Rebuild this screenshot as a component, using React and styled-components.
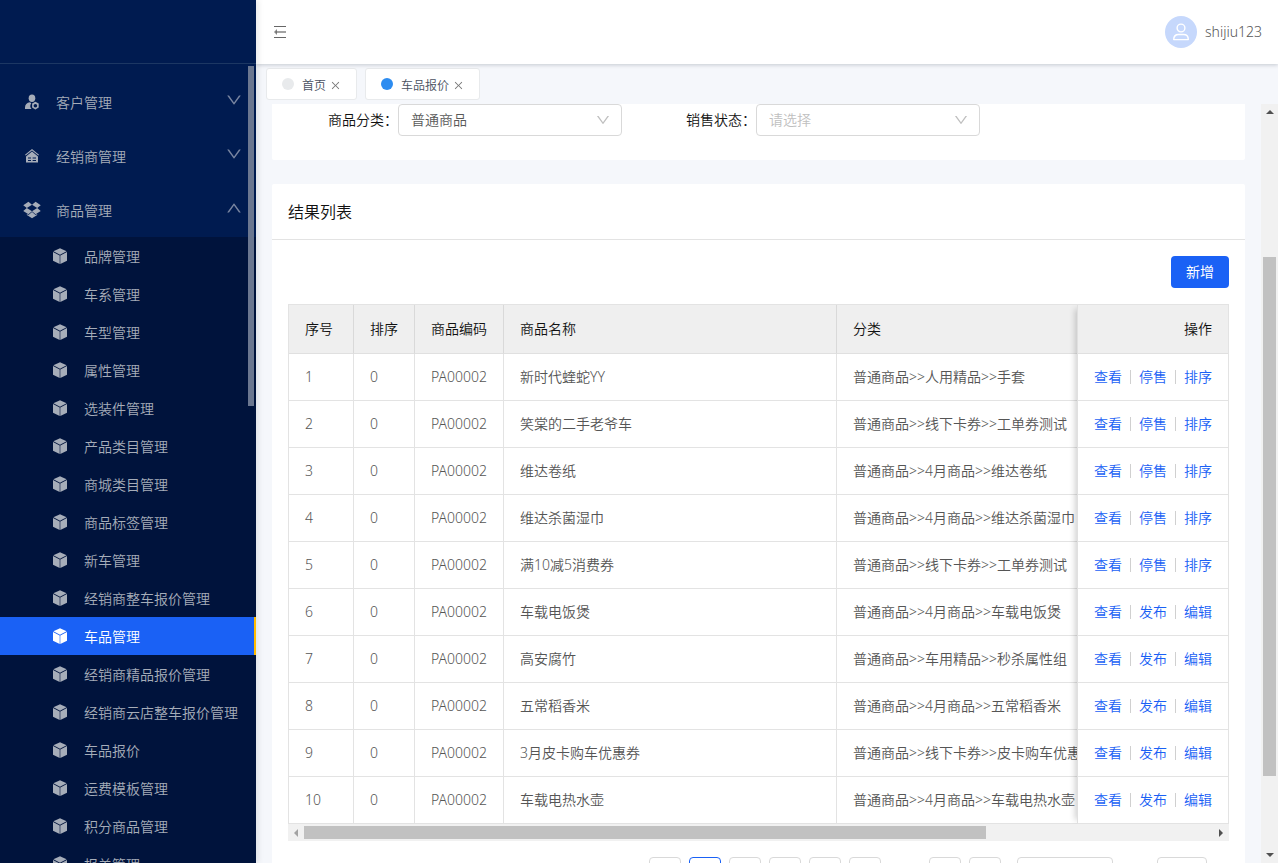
import React from 'react';
import styled, { createGlobalStyle } from 'styled-components';
import { AiOutlineClose, AiOutlineDown, AiOutlineUp, AiOutlineDropbox } from 'react-icons/ai';

const submenu = [
    '品牌管理', '车系管理', '车型管理', '属性管理', '选装件管理', '产品类目管理',
    '商城类目管理', '商品标签管理', '新车管理', '经销商整车报价管理', '车品管理',
    '经销商精品报价管理', '经销商云店整车报价管理', '车品报价', '运费模板管理',
    '积分商品管理', '报关管理',
];

const onSale = ['查看', '停售', '排序'];
const draft = ['查看', '发布', '编辑'];

const products = [
    { name: '新时代蝰蛇YY', type: '普通商品>>人用精品>>手套', actions: onSale },
    { name: '笑棠的二手老爷车', type: '普通商品>>线下卡券>>工单券测试', actions: onSale },
    { name: '维达卷纸', type: '普通商品>>4月商品>>维达卷纸', actions: onSale },
    { name: '维达杀菌湿巾', type: '普通商品>>4月商品>>维达杀菌湿巾', actions: onSale },
    { name: '满10减5消费券', type: '普通商品>>线下卡券>>工单券测试', actions: onSale },
    { name: '车载电饭煲', type: '普通商品>>4月商品>>车载电饭煲', actions: draft },
    { name: '高安腐竹', type: '普通商品>>车用精品>>秒杀属性组', actions: draft },
    { name: '五常稻香米', type: '普通商品>>4月商品>>五常稻香米', actions: draft },
    { name: '3月皮卡购车优惠券', type: '普通商品>>线下卡券>>皮卡购车优惠券', actions: draft },
    { name: '车载电热水壶', type: '普通商品>>4月商品>>车载电热水壶', actions: draft },
];

function CustomerIcon() {
    return (
        <svg width="16" height="16" viewBox="0 0 16 16" fill="currentColor">
            <ellipse cx="8" cy="4.2" rx="3.3" ry="3.7" />
            <path d="M6 8.3 C2.8 8.7 1 10.8 1 13.4 V15 H7.6 A4.6 4.6 0 0 1 7.3 9.2 Z" />
            <path fillRule="evenodd" d="M11.4 7.8 L14.7 9.6 V13.6 L11.4 15.6 L8.1 13.6 V9.6 Z M11.4 9.9 A1.8 1.8 0 1 0 11.4 13.5 A1.8 1.8 0 1 0 11.4 9.9" />
        </svg>
    )
}

function DealerIcon() {
    return (
        <svg width="16" height="16" viewBox="0 0 16 16" fill="currentColor">
            <path d="M8 1 L15 6.8 L14.3 7.6 L8 2.5 L1.7 7.6 L1 6.8 Z" />
            <path fillRule="evenodd" d="M8 3.6 L14 8.4 V14.6 H2 V8.4 Z M4 9.6 V10.6 H7 V9.6 Z M8.6 9.6 V10.6 H12 V9.6 Z M4 12 V13 H7 V12 Z M8.6 12 V13 H12 V12 Z" />
        </svg>
    )
}

function CubeIcon() {
    return (
        <svg width="16" height="16" viewBox="0 0 16 16" fill="currentColor">
            <path d="M8 0.3 L14.6 3.3 L8 6.7 L1.4 3.3 Z" />
            <path d="M1 4.1 L7.7 7.5 V16 L1 12.7 Z" />
            <path d="M15 4.1 L8.3 7.5 V16 L15 12.7 Z" />
        </svg>
    )
}

function FoldIcon() {
    return (
        <svg width="14" height="14" viewBox="0 0 14 14" fill="none" stroke="currentColor">
            <path d="M1 1.5 H13 M1 12.5 H13" />
            <path d="M3 7 H13" strokeWidth="2" opacity="0.6" />
            <path d="M4 4 L1 7 L4 10 Z" fill="currentColor" stroke="none" opacity="0.8" />
        </svg>
    )
}

function UserIcon() {
    return (
        <svg width="18" height="18" viewBox="0 0 18 18" fill="none" stroke="currentColor" strokeWidth="1.4">
            <circle cx="9" cy="5" r="3.9" />
            <path d="M1.7 16.6 C1.7 12.9 4.2 11.5 6.4 11.5 H11.6 C13.8 11.5 16.3 12.9 16.3 16.6 Z" strokeLinejoin="round" />
        </svg>
    )
}

function Sidebar() {
    return (
        <Side>
            <Brand />
            <SideBody>
                <Menu>
                    <li><MenuButton type="button"><IconSlot><CustomerIcon /></IconSlot><MenuText>客户管理</MenuText><AiOutlineDown size={18} /></MenuButton></li>
                    <li><MenuButton type="button"><IconSlot><DealerIcon /></IconSlot><MenuText>经销商管理</MenuText><AiOutlineDown size={18} /></MenuButton></li>
                    <li>
                        <MenuButton type="button"><IconSlot><AiOutlineDropbox size={20} /></IconSlot><MenuText>商品管理</MenuText><AiOutlineUp size={18} /></MenuButton>
                        <SubMenu>
                            {submenu.map((text) => (
                                <li key={text}>
                                    <SubLink href="#" $active={text === '车品管理'}><CubeIcon /><span>{text}</span></SubLink>
                                </li>
                            ))}
                        </SubMenu>
                    </li>
                </Menu>
                <SideThumb />
            </SideBody>
        </Side>
    )
}

function Filters() {
    return (
        <FilterCard>
            <Field>
                <label htmlFor="category">商品分类：</label>
                <SelectBox>
                    <Select id="category" defaultValue="普通商品"><option>普通商品</option></Select>
                    <AiOutlineDown size={16} />
                </SelectBox>
            </Field>
            <Field>
                <label htmlFor="status">销售状态：</label>
                <SelectBox>
                    <Select id="status" defaultValue="" $empty><option value="">请选择</option></Select>
                    <AiOutlineDown size={16} />
                </SelectBox>
            </Field>
        </FilterCard>
    )
}

function ProductTable() {
    return (
        <TableArea>
            <TableRow>
                <MainTable>
                    <Table>
                        <colgroup>
                            <Col $w={65} /><Col $w={61} /><Col $w={89} /><Col $w={333} /><Col $w={333} />
                        </colgroup>
                        <thead>
                            <tr><Th>序号</Th><Th>排序</Th><Th>商品编码</Th><Th>商品名称</Th><Th>分类</Th></tr>
                        </thead>
                        <tbody>
                            {products.map((item, i) => (
                                <tr key={item.name}>
                                    <Td>{i + 1}</Td>
                                    <Td>0</Td>
                                    <Td>PA00002</Td>
                                    <Td>{item.name}</Td>
                                    <Td>{item.type}</Td>
                                </tr>
                            ))}
                        </tbody>
                    </Table>
                </MainTable>
                <FixedTable>
                    <Table>
                        <thead>
                            <tr><Th $right>操作</Th></tr>
                        </thead>
                        <tbody>
                            {products.map((item) => (
                                <tr key={item.name}>
                                    <Td>
                                        <Actions>
                                            {item.actions.map((a) => <a href="#" key={a}>{a}</a>)}
                                        </Actions>
                                    </Td>
                                </tr>
                            ))}
                        </tbody>
                    </Table>
                </FixedTable>
            </TableRow>
            <HScroll>
                <Arrow viewBox="0 0 16 16" $faded><path d="M10 4 V12 L6 8 Z" /></Arrow>
                <HTrack><HThumb /></HTrack>
                <Arrow viewBox="0 0 16 16"><path d="M6 4 V12 L10 8 Z" /></Arrow>
            </HScroll>
        </TableArea>
    )
}

function Pagination() {
    return (
        <Pages>
            <PageButton type="button" aria-label="上一页">‹</PageButton>
            {[1, 2, 3, 4, 5].map((n) => (
                <PageButton type="button" key={n} $current={n === 1}>{n}</PageButton>
            ))}
            <Ellipsis />
            <PageButton type="button">20</PageButton>
            <PageButton type="button" aria-label="下一页">›</PageButton>
            <PageSize aria-label="每页条数"><option>10 条/页</option></PageSize>
            <Jumper aria-label="跳至" />
        </Pages>
    )
}

export default function App() {
    return (
        <>
            <GlobalStyle />
            <Layout>
                <Sidebar />
                <Main>
                    <Header>
                        <IconButton type="button" aria-label="收起菜单"><FoldIcon /></IconButton>
                        <User>
                            <Avatar><UserIcon /></Avatar>
                            shijiu123
                        </User>
                    </Header>
                    <Tabs>
                        <Tab><Dot /><TabText>首页</TabText><CloseButton type="button" aria-label="关闭首页"><AiOutlineClose size={11} /></CloseButton></Tab>
                        <Tab><Dot $active /><TabText>车品报价</TabText><CloseButton type="button" aria-label="关闭车品报价"><AiOutlineClose size={11} /></CloseButton></Tab>
                    </Tabs>
                    <Body>
                        <Content>
                            <Filters />
                            <Card>
                                <CardTitle>结果列表</CardTitle>
                                <CardBody>
                                    <Toolbar><PrimaryButton type="button">新增</PrimaryButton></Toolbar>
                                    <ProductTable />
                                    <Pagination />
                                </CardBody>
                            </Card>
                        </Content>
                        <VScroll>
                            <Arrow viewBox="0 0 16 16"><path d="M4 10 H12 L8 6 Z" /></Arrow>
                            <VTrack><VThumb /></VTrack>
                            <Arrow viewBox="0 0 16 16"><path d="M4 6 H12 L8 10 Z" /></Arrow>
                        </VScroll>
                    </Body>
                </Main>
            </Layout>
        </>
    )
}


const GlobalStyle = createGlobalStyle`
    * {
        box-sizing: border-box;
    }

    body {
        margin: 0;
        overflow: hidden;
        font-family: "Noto Sans", "Noto Sans CJK SC", sans-serif;
        font-size: 14px;
        font-weight: 350;
        line-height: 22px;
        color: #555;
    }

    button, select, input {
        font: inherit;
    }

    a {
        text-decoration: none;
    }

    ul {
        list-style: none;
        margin: 0;
        padding: 0;
    }
`

const Layout = styled.div`
    display: flex;
    height: 100vh;
    background: #f5f7fb;
`

const Side = styled.aside`
    width: 256px;
    flex-shrink: 0;
    display: flex;
    flex-direction: column;
    background: #001b50;
    color: #a6adb9;
    z-index: 2;
    box-shadow: 2px 0 6px rgba(0, 21, 41, 0.1);
`

const Brand = styled.div`
    height: 64px;
    flex-shrink: 0;
    border-bottom: 1px solid #1c3763;
`

const SideBody = styled.nav`
    position: relative;
    flex: 1;
    min-height: 0;
    overflow: hidden;
    padding-top: 11px;
`

const Menu = styled.ul`
    width: 100%;
`

const MenuButton = styled.button`
    width: 100%;
    height: 54px;
    display: flex;
    align-items: center;
    gap: 16px;
    padding: 0 13px 0 24px;
    border: 0;
    background: none;
    color: inherit;
    text-align: left;

    > svg {
        color: #7885a0;
        margin-bottom: 4px;
    }
`

const IconSlot = styled.span`
    width: 16px;
    display: flex;
    justify-content: center;

    svg {
        flex-shrink: 0;
    }
`

const MenuText = styled.span`
    flex: 1;
    padding-top: 2px;
`

const SubMenu = styled.ul`
    background: #00133c;
`

const SubLink = styled.a`
    height: 38px;
    display: flex;
    align-items: center;
    gap: 16px;
    padding-left: 52px;
    color: ${(p) => (p.$active ? '#fff' : 'inherit')};
    background: ${(p) => (p.$active ? '#1a61f5' : 'none')};
    border-right: 2px solid ${(p) => (p.$active ? '#ffba00' : 'transparent')};

    span {
        padding-top: 2px;
    }
`

/* floats over the menu */
const SideThumb = styled.div`
    position: absolute;
    top: 2px;
    right: 2px;
    width: 6px;
    height: 340px;
    background: #6b7790;
`

const Main = styled.div`
    flex: 1;
    min-width: 0;
    display: flex;
    flex-direction: column;
`

const Header = styled.header`
    height: 64px;
    flex-shrink: 0;
    display: flex;
    align-items: center;
    justify-content: space-between;
    padding: 0 16px;
    background: #fff;
    box-shadow: 0 1px 4px rgba(0, 21, 41, 0.2);
    z-index: 1;
`

const IconButton = styled.button`
    display: flex;
    padding: 0 1px;
    border: 0;
    background: none;
    color: #666;
`

const User = styled.div`
    display: flex;
    align-items: center;
    gap: 8px;
`

const Avatar = styled.span`
    width: 32px;
    height: 32px;
    display: flex;
    align-items: center;
    justify-content: center;
    border-radius: 50%;
    background: #c6d8fc;
    color: #fff;
`

const Tabs = styled.div`
    height: 40px;
    flex-shrink: 0;
    display: flex;
    gap: 8px;
    padding: 4px 10px;
`

const Tab = styled.div`
    height: 32px;
    display: flex;
    align-items: center;
    padding: 0 15px;
    border: 1px solid #e8eaec;
    border-radius: 3px;
    background: #fff;
    font-size: 12px;
    color: #495060;
`

const TabText = styled.span`
    padding-top: 3px;
`

const Dot = styled.span`
    width: 12px;
    height: 12px;
    margin-right: 8px;
    border-radius: 50%;
    background: ${(p) => (p.$active ? '#2d8cf0' : '#e8eaec')};
`

const CloseButton = styled.button`
    display: flex;
    padding: 3px 0 0;
    margin-left: 4px;
    border: 0;
    background: none;
    color: #777;
`

const Body = styled.div`
    flex: 1;
    min-height: 0;
    display: flex;
`

const Content = styled.main`
    flex: 1;
    min-width: 0;
    overflow: hidden;
    padding: 0 16px;
`

const FilterCard = styled.section`
    height: 56px;
    margin-bottom: 24px;
    padding-left: 56px;
    display: flex;
    align-items: flex-start;
    gap: 64px;
    background: #fff;
    border-radius: 0 0 2px 2px;
    color: #111;
`

const Field = styled.div`
    display: flex;
    align-items: center;
`

const SelectBox = styled.div`
    position: relative;
    width: 224px;

    svg {
        position: absolute;
        top: 8px;
        right: 11px;
        color: #bfbfbf;
        pointer-events: none;
    }
`

const Select = styled.select`
    appearance: none;
    width: 100%;
    height: 32px;
    padding: 0 12px;
    border: 1px solid #d9d9d9;
    border-radius: 4px;
    background: #fff;
    color: ${(p) => (p.$empty ? '#bfbfbf' : '#595959')};
`

const Card = styled.section`
    background: #fff;
    border-radius: 2px;
`

const CardTitle = styled.h2`
    margin: 0;
    padding: 17px 16px 15px;
    border-bottom: 1px solid #e3e3e3;
    font-size: 16px;
    font-weight: 350;
    line-height: 23px;
    color: #111;
`

const CardBody = styled.div`
    padding: 16px;
`

const Toolbar = styled.div`
    display: flex;
    justify-content: flex-end;
    margin-bottom: 16px;
`

const PrimaryButton = styled.button`
    height: 32px;
    padding: 0 15px;
    border: 0;
    border-radius: 4px;
    background: #1a61f5;
    color: #fff;
    font-weight: 400;
`

const TableArea = styled.div`
    margin-bottom: 16px;
`

const TableRow = styled.div`
    display: flex;
    border: 1px solid #e3e3e3;
    border-bottom: 0;
`

const MainTable = styled.div`
    flex: 1;
    min-width: 0;
    overflow: hidden;
`

const FixedTable = styled.div`
    width: 151px;
    flex-shrink: 0;
    border-left: 1px solid #e0e0e0;
    box-shadow: -6px 0 6px -4px rgba(0, 0, 0, 0.18);
    clip-path: inset(0 0 0 -10px);
    background: #fff;
`

const Table = styled.table`
    width: 100%;
    min-width: max-content;
    table-layout: fixed;
    border-collapse: separate;
    border-spacing: 0;
`

const Col = styled.col`
    width: ${(p) => p.$w}px;
`

const Th = styled.th`
    height: 49px;
    padding: 0 16px;
    border-bottom: 1px solid #e0e0e0;
    border-right: 1px solid #d9d9d9;
    background: #efefef;
    color: #111;
    font-weight: 350;
    text-align: ${(p) => (p.$right ? 'right' : 'left')};
    white-space: nowrap;

    &:last-child {
        border-right: 0;
    }
`

const Td = styled.td`
    height: 47px;
    padding: 0 16px;
    border-bottom: 1px solid #e3e3e3;
    border-right: 1px solid #e3e3e3;
    white-space: nowrap;

    &:last-child {
        border-right: 0;
    }
`

const Actions = styled.div`
    display: flex;
    align-items: center;

    a {
        color: #1a61f5;
        line-height: 14px;
    }

    a + a {
        margin-left: 8px;
        padding-left: 8px;
        border-left: 1px solid #d0d0d0;
    }
`

const HScroll = styled.div`
    height: 17px;
    display: flex;
    align-items: center;
    background: #f1f1f1;
`

const HTrack = styled.div`
    flex: 1;
`

const HThumb = styled.div`
    width: 75%;
    height: 13px;
    background: #c1c1c1;
`

const VScroll = styled.div`
    width: 17px;
    flex-shrink: 0;
    display: flex;
    flex-direction: column;
    align-items: center;
    background: #f1f1f1;
`

const VTrack = styled.div`
    flex: 1;
    display: flex;
    flex-direction: column;
    padding-top: 137px;
`

const VThumb = styled.div`
    width: 13px;
    height: 519px;
    background: #c1c1c1;
`

const Arrow = styled.svg`
    width: 16px;
    height: 16px;
    flex-shrink: 0;
    fill: ${(p) => (p.$faded ? '#a3a3a3' : '#505050')};
`

const Pages = styled.div`
    display: flex;
    justify-content: flex-end;
    gap: 8px;
    padding-right: 22px;
`

const PageButton = styled.button`
    width: 32px;
    height: 32px;
    padding: 0;
    border: 1px solid ${(p) => (p.$current ? '#1a61f5' : '#d9d9d9')};
    border-radius: 4px;
    background: #fff;
    color: ${(p) => (p.$current ? '#1a61f5' : '#555')};
`

const Ellipsis = styled.span`
    width: 32px;
`

const PageSize = styled.select`
    appearance: none;
    width: 96px;
    height: 32px;
    margin: 0 36px 0 8px;
    padding: 0 12px;
    border: 1px solid #d9d9d9;
    border-radius: 4px;
    background: #fff;
    color: #555;
`

const Jumper = styled.input`
    width: 50px;
    height: 32px;
    border: 1px solid #d9d9d9;
    border-radius: 4px;
`
